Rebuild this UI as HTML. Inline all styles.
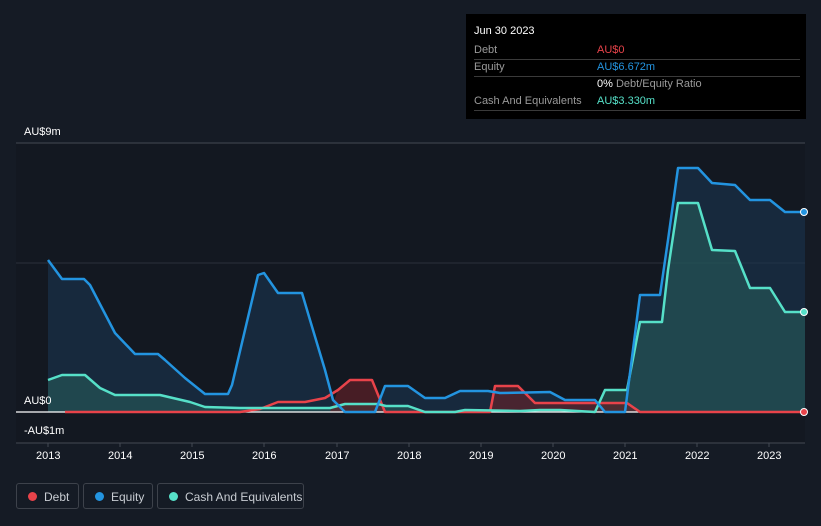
<!DOCTYPE html>
<html><head><style>
body{margin:0;width:821px;height:526px;background:#151b25;font-family:"Liberation Sans",sans-serif;overflow:hidden;position:relative}
.t{position:absolute;color:#fff;font-size:11px}
.tip{position:absolute;left:466px;top:14px;width:340px;height:105px;background:#000;}
.tip .r{position:absolute;left:8px;right:6px;height:17px;border-bottom:1px solid #3a3a3a;font-size:11px;color:#9a9a9a;line-height:17px}
.tip .v{position:absolute;left:123px}
.lg{position:absolute;top:483px;height:26px;border:1px solid #3d424b;border-radius:3px;color:#c8ccd2;font-size:12px;line-height:26px;box-sizing:border-box}
.lg i{position:absolute;left:11px;top:8px;width:9px;height:9px;border-radius:50%}
.lg span{position:absolute;left:27px}
</style></head><body>
<svg width="821" height="526" style="position:absolute;left:0;top:0">
<rect x="16" y="143" width="789" height="300" fill="#131821"/>
<line x1="16" y1="143" x2="805" y2="143" stroke="#444a54"/>
<line x1="16" y1="263" x2="805" y2="263" stroke="#2b313a"/>
<line x1="16" y1="443" x2="805" y2="443" stroke="#444a54"/>
<g stroke="#444a54"><line x1="48" y1="443" x2="48" y2="447"/><line x1="120" y1="443" x2="120" y2="447"/><line x1="192" y1="443" x2="192" y2="447"/><line x1="264" y1="443" x2="264" y2="447"/><line x1="337" y1="443" x2="337" y2="447"/><line x1="409" y1="443" x2="409" y2="447"/><line x1="481" y1="443" x2="481" y2="447"/><line x1="553" y1="443" x2="553" y2="447"/><line x1="625" y1="443" x2="625" y2="447"/><line x1="697" y1="443" x2="697" y2="447"/><line x1="769" y1="443" x2="769" y2="447"/></g>
<polygon fill="#1a3550" fill-opacity="0.6" points="48,412 48,260 62,279 84,279 90,285 115,333 135,354 158,354 165,360 185,378 205,394 228,394 232,385 258,275 264,273 278,293 302,293 310,320 325,370 333,400 345,412 375,412 385,386 408,386 425,398 445,398 460,391 488,391 500,393 550,392 565,400 595,400 605,412 625,412 640,295 660,295 668,240 678,168 698,168 712,183 735,185 750,200 770,200 785,212 805,212 805,412"/>
<polygon fill="#2a6660" fill-opacity="0.5" points="48,412 48,380 62,375 85,375 100,388 115,395 160,395 190,402 205,407 240,408 330,408 345,404 378,404 386,406 408,406 425,412 455,412 465,410 520,411 540,410 560,410 595,412 605,390 627,390 640,322 662,322 668,270 678,203 698,203 712,250 735,251 750,288 770,288 785,312 805,312 805,412"/>
<polygon fill="#6a2228" fill-opacity="0.6" points="330,412 338,390 350,380 372,380 385,412 490,412 495,386 518,386 535,403 627,403 640,412"/>
<line x1="16" y1="412" x2="805" y2="412" stroke="#fff" stroke-width="1.2"/>
<polyline fill="none" stroke="#e8434a" stroke-width="2.5" stroke-linejoin="round" points="65,412 240,412 260,409 278,402 305,402 325,398 338,390 350,380 372,380 385,412 490,412 495,386 518,386 535,403 560,403 600,403 627,403 640,412 805,412"/>
<polyline fill="none" stroke="#56e0c8" stroke-width="2.5" stroke-linejoin="round" points="48,380 62,375 85,375 100,388 115,395 160,395 190,402 205,407 240,408 330,408 345,404 378,404 386,406 408,406 425,412 455,412 465,410 520,411 540,410 560,410 595,412 605,390 627,390 640,322 662,322 668,270 678,203 698,203 712,250 735,251 750,288 770,288 785,312 805,312"/>
<polyline fill="none" stroke="#2394e0" stroke-width="2.5" stroke-linejoin="round" points="48,260 62,279 84,279 90,285 115,333 135,354 158,354 165,360 185,378 205,394 228,394 232,385 258,275 264,273 278,293 302,293 310,320 325,370 333,400 345,412 375,412 385,386 408,386 425,398 445,398 460,391 488,391 500,393 550,392 565,400 595,400 605,412 625,412 640,295 660,295 668,240 678,168 698,168 712,183 735,185 750,200 770,200 785,212 805,212"/>
<circle cx="804" cy="212" r="3.5" fill="#2394e0" stroke="#fff" stroke-width="1"/>
<circle cx="804" cy="312" r="3.5" fill="#56e0c8" stroke="#fff" stroke-width="1"/>
<circle cx="804" cy="412" r="3.5" fill="#e8434a" stroke="#fff" stroke-width="1"/>
</svg>
<div class="t" style="left:24px;top:126px">AU$9m</div>
<div class="t" style="left:24px;top:395px">AU$0</div>
<div class="t" style="left:24px;top:425px">-AU$1m</div>
<div class="t" style="left:36px;top:450px">2013</div>
<div class="t" style="left:108px;top:450px">2014</div>
<div class="t" style="left:180px;top:450px">2015</div>
<div class="t" style="left:252px;top:450px">2016</div>
<div class="t" style="left:325px;top:450px">2017</div>
<div class="t" style="left:397px;top:450px">2018</div>
<div class="t" style="left:469px;top:450px">2019</div>
<div class="t" style="left:541px;top:450px">2020</div>
<div class="t" style="left:613px;top:450px">2021</div>
<div class="t" style="left:685px;top:450px">2022</div>
<div class="t" style="left:757px;top:450px">2023</div>
<div class="tip">
<div style="position:absolute;left:8px;top:11px;color:#fff;font-size:11px">Jun 30 2023</div>
<div class="r" style="top:28px">Debt<span class="v" style="color:#e8434a">AU$0</span></div>
<div class="r" style="top:45px">Equity<span class="v" style="color:#2394e0">AU$6.672m</span></div>
<div class="r" style="top:62px;border:none"><span class="v"><b style="color:#fff;font-weight:normal">0%</b> Debt/Equity Ratio</span></div>
<div class="r" style="top:79px">Cash And Equivalents<span class="v" style="color:#56e0c8">AU$3.330m</span></div>
</div>
<div class="lg" style="left:16px;width:63px"><i style="background:#e8434a"></i><span>Debt</span></div>
<div class="lg" style="left:83px;width:70px"><i style="background:#2394e0"></i><span>Equity</span></div>
<div class="lg" style="left:157px;width:147px"><i style="background:#56e0c8"></i><span>Cash And Equivalents</span></div>
</body></html>
